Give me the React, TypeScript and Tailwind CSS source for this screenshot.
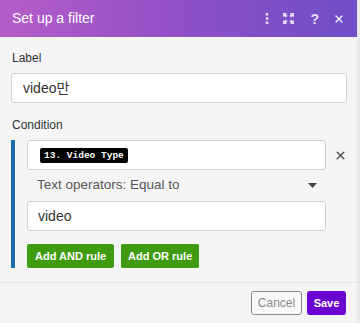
import { X } from "lucide-react";

const HeaderIcons = () => (
  <div className="flex items-center text-white/80">
    <svg className="w-[4px] h-[11px]" viewBox="0 0 4 11" fill="currentColor">
      <rect x="0.7" y="0" width="2.6" height="2.6" rx="0.5" />
      <rect x="0.7" y="4.2" width="2.6" height="2.6" rx="0.5" />
      <rect x="0.7" y="8.4" width="2.6" height="2.6" rx="0.5" />
    </svg>
    <svg className="w-[11px] h-[11px] ml-[14px]" viewBox="0 0 12 12" fill="currentColor">
      <path d="M0 0h4.5L3.2 1.3 5 3.1 3.1 5 1.3 3.2 0 4.5z" />
      <path d="M12 0v4.5L10.7 3.2 8.9 5 7 3.1 8.8 1.3 7.5 0z" />
      <path d="M0 12V7.5l1.3 1.3L3.1 7 5 8.9 3.2 10.7 4.5 12z" />
      <path d="M12 12H7.5l1.3-1.3L7 8.9 8.9 7l1.8 1.8L12 7.5z" />
    </svg>
    <span className="ml-[16px] text-[14px] font-bold leading-none">?</span>
    <X className="w-[12px] h-[12px] ml-[14px]" strokeWidth={3.2} />
  </div>
);

export default function App() {
  return (
    <div
      className="w-[360px] h-[323px] flex bg-[#e9e9ec] overflow-hidden"
      style={{ fontFamily: "'Liberation Sans', Arial, 'Noto Sans CJK KR', sans-serif" }}
    >
      <div className="w-[357px] flex flex-col bg-[#f5f5f6]">
        <div className="h-[37px] flex items-center justify-between pl-[12px] pr-[12px] bg-gradient-to-r from-[#b65cc9] via-[#9150c6] to-[#6d4ec6]">
          <span className="text-white text-[14px]">Set up a filter</span>
          <HeaderIcons />
        </div>

        <div className="px-[11px] pt-[13px]">
          <div className="text-[12px] text-[#333] leading-[16px] pl-[1px]">Label</div>
          <div className="mt-[7px] h-[30px] w-[336px] flex items-center bg-white border border-[#d0d0d0] rounded-[3px] pl-[11px] text-[14px] text-[#333]">
            video만
          </div>
          <div className="mt-[14px] text-[12px] text-[#333] leading-[16px] pl-[1px]">Condition</div>

          <div className="mt-[7px] flex border-l-[4px] border-[#1b6ba8] h-[128px]">
            <div className="pl-[12px] flex flex-col">
              <div className="flex items-center">
                <div className="h-[30px] w-[299px] flex items-center bg-white border border-[#d0d0d0] rounded-[3px] pl-[12px]">
                  <span
                    className="bg-black text-white text-[9.5px] font-bold leading-[15px] px-[4px] rounded-[2px]"
                    style={{ fontFamily: "'Liberation Mono', 'Courier New', monospace" }}
                  >
                    13. Video Type
                  </span>
                </div>
                <X className="w-[13px] h-[13px] ml-[8px] text-[#555]" strokeWidth={3} />
              </div>
              <div className="h-[31px] w-[299px] flex items-center justify-between pl-[10px] pr-[9px] text-[13.5px] text-[#555]">
                <span>Text operators: Equal to</span>
                <svg className="w-[9px] h-[5px]" viewBox="0 0 9 5" fill="#444">
                  <path d="M0 0h9L4.5 5z" />
                </svg>
              </div>
              <div className="h-[30px] w-[299px] flex items-center bg-white border border-[#d0d0d0] rounded-[3px] pl-[10px] text-[14px] text-[#333]">
                video
              </div>
              <div className="mt-[13px] flex gap-[7px]">
                <button className="h-[24px] px-[8px] bg-[#3f9c10] text-white text-[11px] font-bold rounded-[2px]">
                  Add AND rule
                </button>
                <button className="h-[24px] px-[7px] bg-[#3f9c10] text-white text-[11px] font-bold rounded-[2px]">
                  Add OR rule
                </button>
              </div>
            </div>
          </div>
        </div>

        <div className="mt-[14px] border-t border-[#e4e4e6] flex justify-end gap-[5px] pt-[8px] pr-[11px]">
          <button className="h-[24px] w-[51px] border border-[#8a8a8a] rounded-[3px] text-[12px] text-[#8a8a8a] bg-[#f8f8f8]">
            Cancel
          </button>
          <button className="h-[24px] w-[39px] rounded-[3px] text-[11px] font-bold text-white bg-[#6b02cf]">
            Save
          </button>
        </div>
      </div>
    </div>
  );
}
